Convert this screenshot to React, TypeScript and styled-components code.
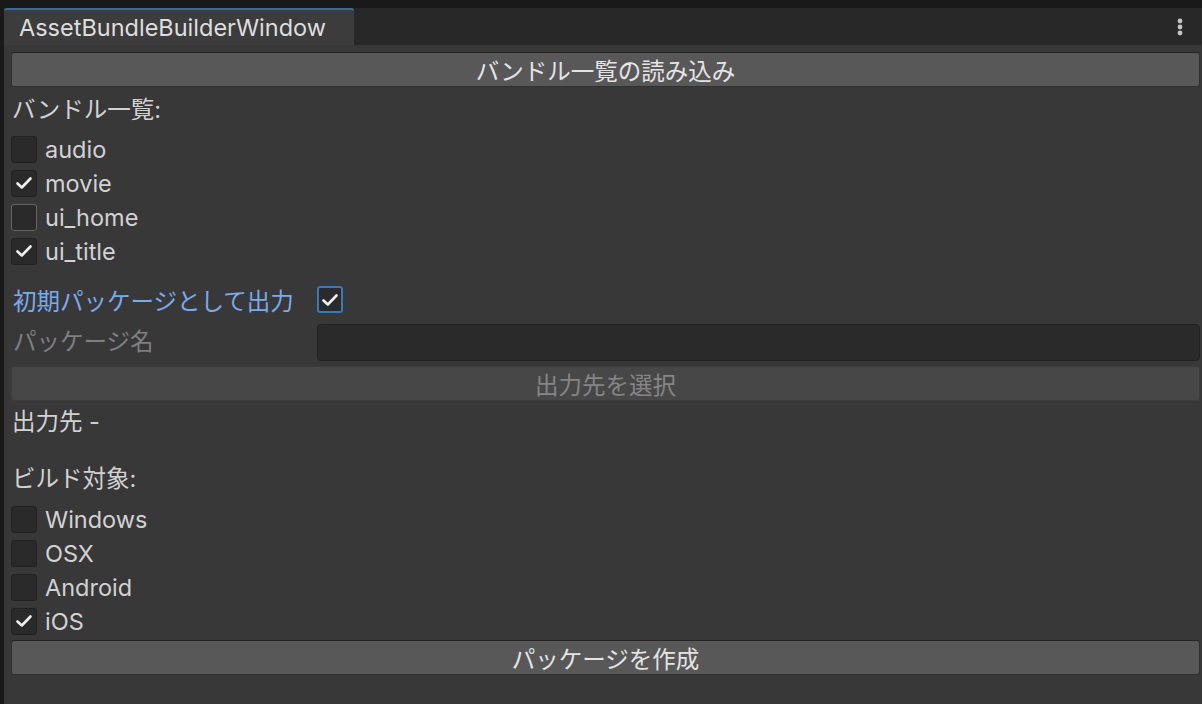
import { FC } from 'react';
import styled, { createGlobalStyle } from 'styled-components';

const GlobalStyle = createGlobalStyle`
  html, body {
    margin: 0;
    padding: 0;
    background: #191919;
  }
  body {
    font-family: Inter, "Noto Sans CJK JP", "Noto Sans", sans-serif;
    font-size: 23.5px;
    color: #d2d2d2;
  }
`;

const Window = styled.div`
  height: 704px;
  padding: 8px 0 0 4px;
  box-sizing: border-box;
  display: flex;
  flex-direction: column;
`;

const TabBar = styled.div`
  height: 37px;
  background: #282828;
  display: flex;
  align-items: stretch;
  justify-content: space-between;
  flex-shrink: 0;
`;

const Tab = styled.div`
  width: 350px;
  background: #3c3c3c;
  border-top: 2px solid #3d6aa0;
  border-radius: 3px 3px 0 0;
  box-sizing: border-box;
  padding-left: 15px;
  display: flex;
  align-items: center;
  color: #dedede;
`;

const MenuButton = styled.div`
  width: 44px;
  display: flex;
  align-items: center;
  justify-content: center;
`;

const Content = styled.div`
  flex: 1;
  background: #383838;
  padding: 7px 2px 0 7px;
  display: flex;
  flex-direction: column;
`;

const Button = styled.div<{ $disabled?: boolean; $gap?: number }>`
  height: 35px;
  margin-top: ${(p) => p.$gap ?? 0}px;
  box-sizing: border-box;
  border-radius: 3px;
  background: ${(p) => (p.$disabled ? '#474747' : '#585858')};
  border: 1px solid ${(p) => (p.$disabled ? '#3c3c3c' : '#303030')};
  border-top-color: ${(p) => (p.$disabled ? '#3c3c3c' : '#242424')};
  color: ${(p) => (p.$disabled ? '#858585' : '#e4e4e4')};
  display: flex;
  align-items: center;
  justify-content: center;
  flex-shrink: 0;
`;

const Label = styled.div<{ $gap?: number }>`
  height: 34px;
  line-height: 34px;
  margin-top: ${(p) => p.$gap ?? 0}px;
  padding-left: 1px;
  color: #d2d2d2;
`;

const Row = styled.div<{ $gap?: number }>`
  height: 34px;
  display: flex;
  align-items: center;
  gap: 8px;
  margin-top: ${(p) => p.$gap ?? 0}px;
`;

const Box = styled.div<{ $hover?: boolean; $focus?: boolean }>`
  width: 26px;
  height: 27px;
  box-sizing: border-box;
  border-radius: 3px;
  background: #2a2a2a;
  border: ${(p) => (p.$focus ? '2px solid #3b76c0' : p.$hover ? '1px solid #656565' : '1px solid #212121')};
  display: flex;
  align-items: center;
  justify-content: center;
  flex-shrink: 0;
`;

const FieldRow = styled.div<{ $gap?: number }>`
  height: 37px;
  display: flex;
  align-items: center;
  margin-top: ${(p) => p.$gap ?? 0}px;
`;

const FieldLabel = styled.div<{ $color?: string; $lift?: number }>`
  width: 304px;
  padding-left: 2px;
  padding-bottom: ${(p) => p.$lift ?? 0}px;
  color: ${(p) => p.$color ?? '#7f7f7f'};
`;

const TextField = styled.div`
  flex: 1;
  height: 37px;
  box-sizing: border-box;
  background: #2a2a2a;
  border: 1px solid #212121;
  border-radius: 4px;
`;

const Dots: FC = () => (
  <svg width="6" height="18" viewBox="0 0 6 18">
    <circle cx="3" cy="3" r="2.4" fill="#c4c4c4" />
    <circle cx="3" cy="9" r="2.4" fill="#c4c4c4" />
    <circle cx="3" cy="15" r="2.4" fill="#c4c4c4" />
  </svg>
);

const Check: FC = () => (
  <svg width="18" height="16" viewBox="0 0 18 16">
    <path d="M2.5 8.5L6.8 12.5L15.5 3.5" fill="none" stroke="#eeeeee" strokeWidth="2.6" strokeLinecap="round" strokeLinejoin="round" />
  </svg>
);

const Toggle: FC<{ label: string; checked?: boolean; hover?: boolean; gap?: number }> = ({
  label,
  checked,
  hover,
  gap,
}) => (
  <Row $gap={gap}>
    <Box $hover={hover}>{checked && <Check />}</Box>
    <span>{label}</span>
  </Row>
);

const bundles = [
  { name: 'audio', checked: false },
  { name: 'movie', checked: true },
  { name: 'ui_home', checked: false, hover: true },
  { name: 'ui_title', checked: true },
];

const targets = [
  { name: 'Windows', checked: false },
  { name: 'OSX', checked: false },
  { name: 'Android', checked: false },
  { name: 'iOS', checked: true },
];

const App: FC = () => (
  <>
    <GlobalStyle />
    <Window>
      <TabBar>
        <Tab>AssetBundleBuilderWindow</Tab>
        <MenuButton>
          <Dots />
        </MenuButton>
      </TabBar>
      <Content>
        <Button>バンドル一覧の読み込み</Button>
        <Label $gap={6}>バンドル一覧:</Label>
        {bundles.map((b, i) => (
          <Toggle key={b.name} label={b.name} checked={b.checked} hover={b.hover} gap={i === 0 ? 5 : 0} />
        ))}
        <FieldRow $gap={13}>
          <FieldLabel $color="#7aaaee">初期パッケージとして出力</FieldLabel>
          <Box $focus>
            <Check />
          </Box>
        </FieldRow>
        <FieldRow $gap={6}>
          <FieldLabel $lift={5}>パッケージ名</FieldLabel>
          <TextField />
        </FieldRow>
        <Button $disabled $gap={5}>
          出力先を選択
        </Button>
        <Label $gap={4}>出力先 -</Label>
        <Label $gap={23}>ビルド対象:</Label>
        {targets.map((t, i) => (
          <Toggle key={t.name} label={t.name} checked={t.checked} gap={i === 0 ? 6 : 0} />
        ))}
        <Button $gap={2}>パッケージを作成</Button>
      </Content>
    </Window>
  </>
);

export default App;
